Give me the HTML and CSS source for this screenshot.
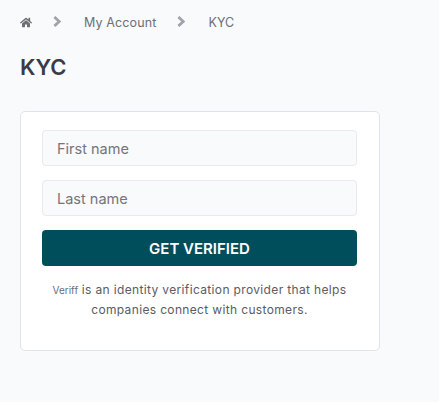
FILE: index.html
```html
<!DOCTYPE html>
<html>
  <head>
    <title>KYC</title>
    <link rel="stylesheet" href="styles.css">
  </head>

  <body>
    <div class="breadcrumb">
      <svg class="home-icon" viewBox="0 0 576 512"><path d="M280.4 148.3 96 300.1V464a16 16 0 0 0 16 16l112-.3a16 16 0 0 0 15.9-16V368a16 16 0 0 1 16-16h64a16 16 0 0 1 16 16v95.6a16 16 0 0 0 16 16.1l112 .3a16 16 0 0 0 16-16V300L295.7 148.3a12.2 12.2 0 0 0-15.3 0zM571.6 251.5 488 182.6V44.1a12 12 0 0 0-12-12h-56a12 12 0 0 0-12 12v72.6L318.5 43a48 48 0 0 0-61 0L4.3 251.5a12 12 0 0 0-1.6 16.9l25.5 31A12 12 0 0 0 45.2 301l235.2-193.7a12.2 12.2 0 0 1 15.3 0L530.9 301a12 12 0 0 0 16.9-1.6l25.5-31a12 12 0 0 0-1.7-16.9z"/></svg>
      <svg class="chevron" viewBox="0 0 8 11"><path d="M1.4 1 6.2 5.5 1.4 10"/></svg>
      <span class="crumb">My Account</span>
      <svg class="chevron" viewBox="0 0 8 11"><path d="M1.4 1 6.2 5.5 1.4 10"/></svg>
      <span class="crumb">KYC</span>
    </div>

    <h1>KYC</h1>

    <div class="card">
      <input class="field" type="text" placeholder="First name">
      <input class="field" type="text" placeholder="Last name">
      <button class="verify-btn">GET VERIFIED</button>
      <p class="note"><span class="provider">Veriff</span> is an identity verification provider that helps companies connect with customers.</p>
    </div>
  </body>
</html>
```

FILE: styles.css
```css
body {
  font-family: Inter, sans-serif;
  background-color: #f9fafc;
  color: #3a3b47;
  margin: 0;
  padding: 14px 20px 0;
}

.breadcrumb {
  display: flex;
  align-items: center;
  height: 16px;
  font-size: 12.5px;
  color: #6e6f76;
}

.home-icon {
  width: 12px;
  height: 11px;
  fill: #6e6f76;
}

.chevron {
  width: 8px;
  height: 11px;
  margin: -1px 23px 0 21px;
  fill: none;
  stroke: #a0a3ad;
  stroke-width: 2.8;
}

.crumb {
  letter-spacing: 0.12px;
}

h1 {
  margin: 24px 0 30px;
  font-size: 22px;
  line-height: 27px;
  font-weight: 600;
}

.card {
  width: 360px;
  height: 240px;
  box-sizing: border-box;
  padding: 18px 22px 0 21px;
  background-color: #fff;
  border: 1px solid #e1e3ea;
  border-radius: 5px;
}

.field {
  display: block;
  width: 100%;
  height: 36px;
  box-sizing: border-box;
  margin-bottom: 14px;
  padding: 0 14px;
  font-family: Inter, sans-serif;
  font-size: 14.5px;
  background-color: #f9fafc;
  border: 1px solid #e8eaf0;
  border-radius: 4px;
}

.field::placeholder {
  color: #74757c;
  opacity: 1;
}

.verify-btn {
  display: block;
  width: 100%;
  height: 36px;
  font-family: Inter, sans-serif;
  font-size: 15px;
  font-weight: 600;
  color: #fff;
  background-color: #004e5c;
  border: 0;
  border-radius: 4px;
}

.note {
  margin: 14px 0 0;
  font-size: 12px;
  line-height: 19px;
  letter-spacing: 0.35px;
  text-align: center;
  color: #5a5b63;
}

.provider {
  font-size: 10px;
  letter-spacing: 0;
  color: #6a6c80;
}
```
